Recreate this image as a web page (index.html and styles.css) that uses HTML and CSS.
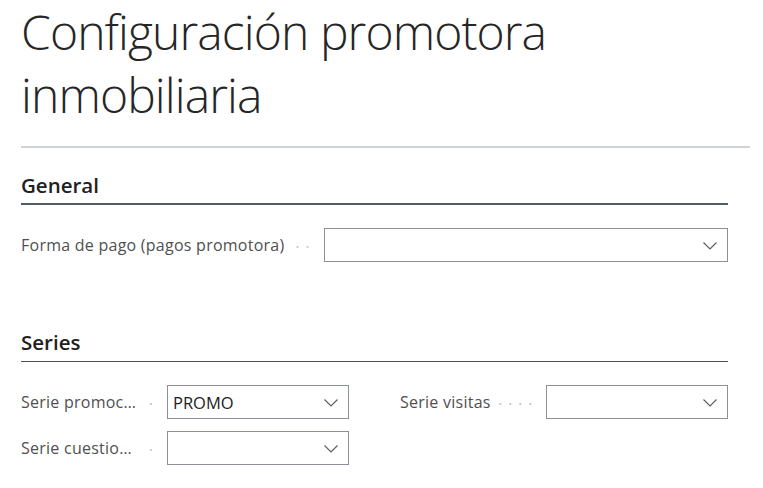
FILE: index.html
```html
<!DOCTYPE html>
<html lang="es">
<head>
<meta charset="utf-8">
<title>Configuración promotora inmobiliaria</title>
<link rel="stylesheet" href="styles.css">
</head>
<body>
<div class="page">
  <h1 class="title">Configuración promotora inmobiliaria</h1>
  <div class="divider"></div>

  <section class="group group-general">
    <h2 class="group-title thick">General</h2>
    <div class="field field-wide">
      <span class="label">Forma de pago (pagos promotora)</span>
      <span class="leader"></span>
      <div class="select">
        <span class="value"></span>
        <svg class="chev" width="14" height="8" viewBox="0 0 14 8"><path d="M0.5 0.5 L7 7 L13.5 0.5" fill="none" stroke="#5f5a55" stroke-width="1.1"/></svg>
      </div>
    </div>
  </section>

  <section class="group group-series">
    <h2 class="group-title thin">Series</h2>
    <div class="grid">
      <div class="field">
        <span class="label">Serie promociones</span>
        <span class="leader"></span>
        <div class="select">
          <span class="value">PROMO</span>
          <svg class="chev" width="14" height="8" viewBox="0 0 14 8"><path d="M0.5 0.5 L7 7 L13.5 0.5" fill="none" stroke="#5f5a55" stroke-width="1.1"/></svg>
        </div>
      </div>
      <div class="field">
        <span class="label">Serie visitas</span>
        <span class="leader"></span>
        <div class="select">
          <span class="value"></span>
          <svg class="chev" width="14" height="8" viewBox="0 0 14 8"><path d="M0.5 0.5 L7 7 L13.5 0.5" fill="none" stroke="#5f5a55" stroke-width="1.1"/></svg>
        </div>
      </div>
      <div class="field">
        <span class="label">Serie cuestionarios</span>
        <span class="leader"></span>
        <div class="select">
          <span class="value"></span>
          <svg class="chev" width="14" height="8" viewBox="0 0 14 8"><path d="M0.5 0.5 L7 7 L13.5 0.5" fill="none" stroke="#5f5a55" stroke-width="1.1"/></svg>
        </div>
      </div>
    </div>
  </section>
</div>
</body>
</html>
```

FILE: styles.css
```css
* { box-sizing: border-box; }

html, body {
  margin: 0;
  padding: 0;
  background: #ffffff;
}

body {
  font-family: "Open Sans", "Noto Sans", "Liberation Sans", sans-serif;
  color: #212121;
}

.page {
  padding: 0 13px 0 21px;
  width: 763px;
}

.title {
  margin: 0;
  width: 600px;
  font-size: 48px;
  line-height: 63px;
  font-weight: 300;
  color: #262626;
  letter-spacing: -0.9px;
}

.divider {
  margin-top: 20px;
  height: 2px;
  width: 729px;
  background: #cfd3d7;
}

.group {
  width: 707px;
}

.group-general {
  margin-top: 23px;
}

.group-series {
  margin-top: 66px;
}

.group-title {
  margin: 0;
  font-size: 20.5px;
  line-height: 28px;
  font-weight: 600;
  color: #212121;
}

.group-title.thick {
  padding-bottom: 4px;
  border-bottom: 2px solid #505a68;
}

.group-title.thin {
  padding-bottom: 5px;
  border-bottom: 1px solid #505050;
}

.field {
  display: flex;
  align-items: center;
  height: 34px;
}

.group-general .field {
  margin-top: 23px;
}

.grid {
  margin-top: 23px;
  display: grid;
  grid-template-columns: 1fr 1fr;
  column-gap: 51px;
  row-gap: 12px;
}

.label {
  flex: 0 1 auto;
  min-width: 0;
  white-space: nowrap;
  overflow: hidden;
  text-overflow: ellipsis;
  font-size: 16px;
  letter-spacing: 0.25px;
  color: #505050;
}

.grid .label {
  max-width: 117px;
}

.leader {
  flex: 1 1 auto;
  min-width: 8px;
  height: 2px;
  margin: 3px 11px 0 8px;
  background-image: radial-gradient(circle, #cccccc 0.9px, transparent 1.2px);
  background-size: 10px 2px;
  background-repeat: repeat-x;
  background-position: right center;
}

.select {
  flex: 0 0 auto;
  display: flex;
  align-items: center;
  justify-content: space-between;
  height: 34px;
  border: 1px solid #8a8f98;
  background: #fff;
  padding: 0 10px 0 5px;
}

.field-wide .select {
  width: 404px;
}

.grid .select {
  width: 182px;
}

.value {
  font-size: 16.5px;
  color: #212121;
}

.chev {
  display: block;
  margin-top: 1px;
}
```
